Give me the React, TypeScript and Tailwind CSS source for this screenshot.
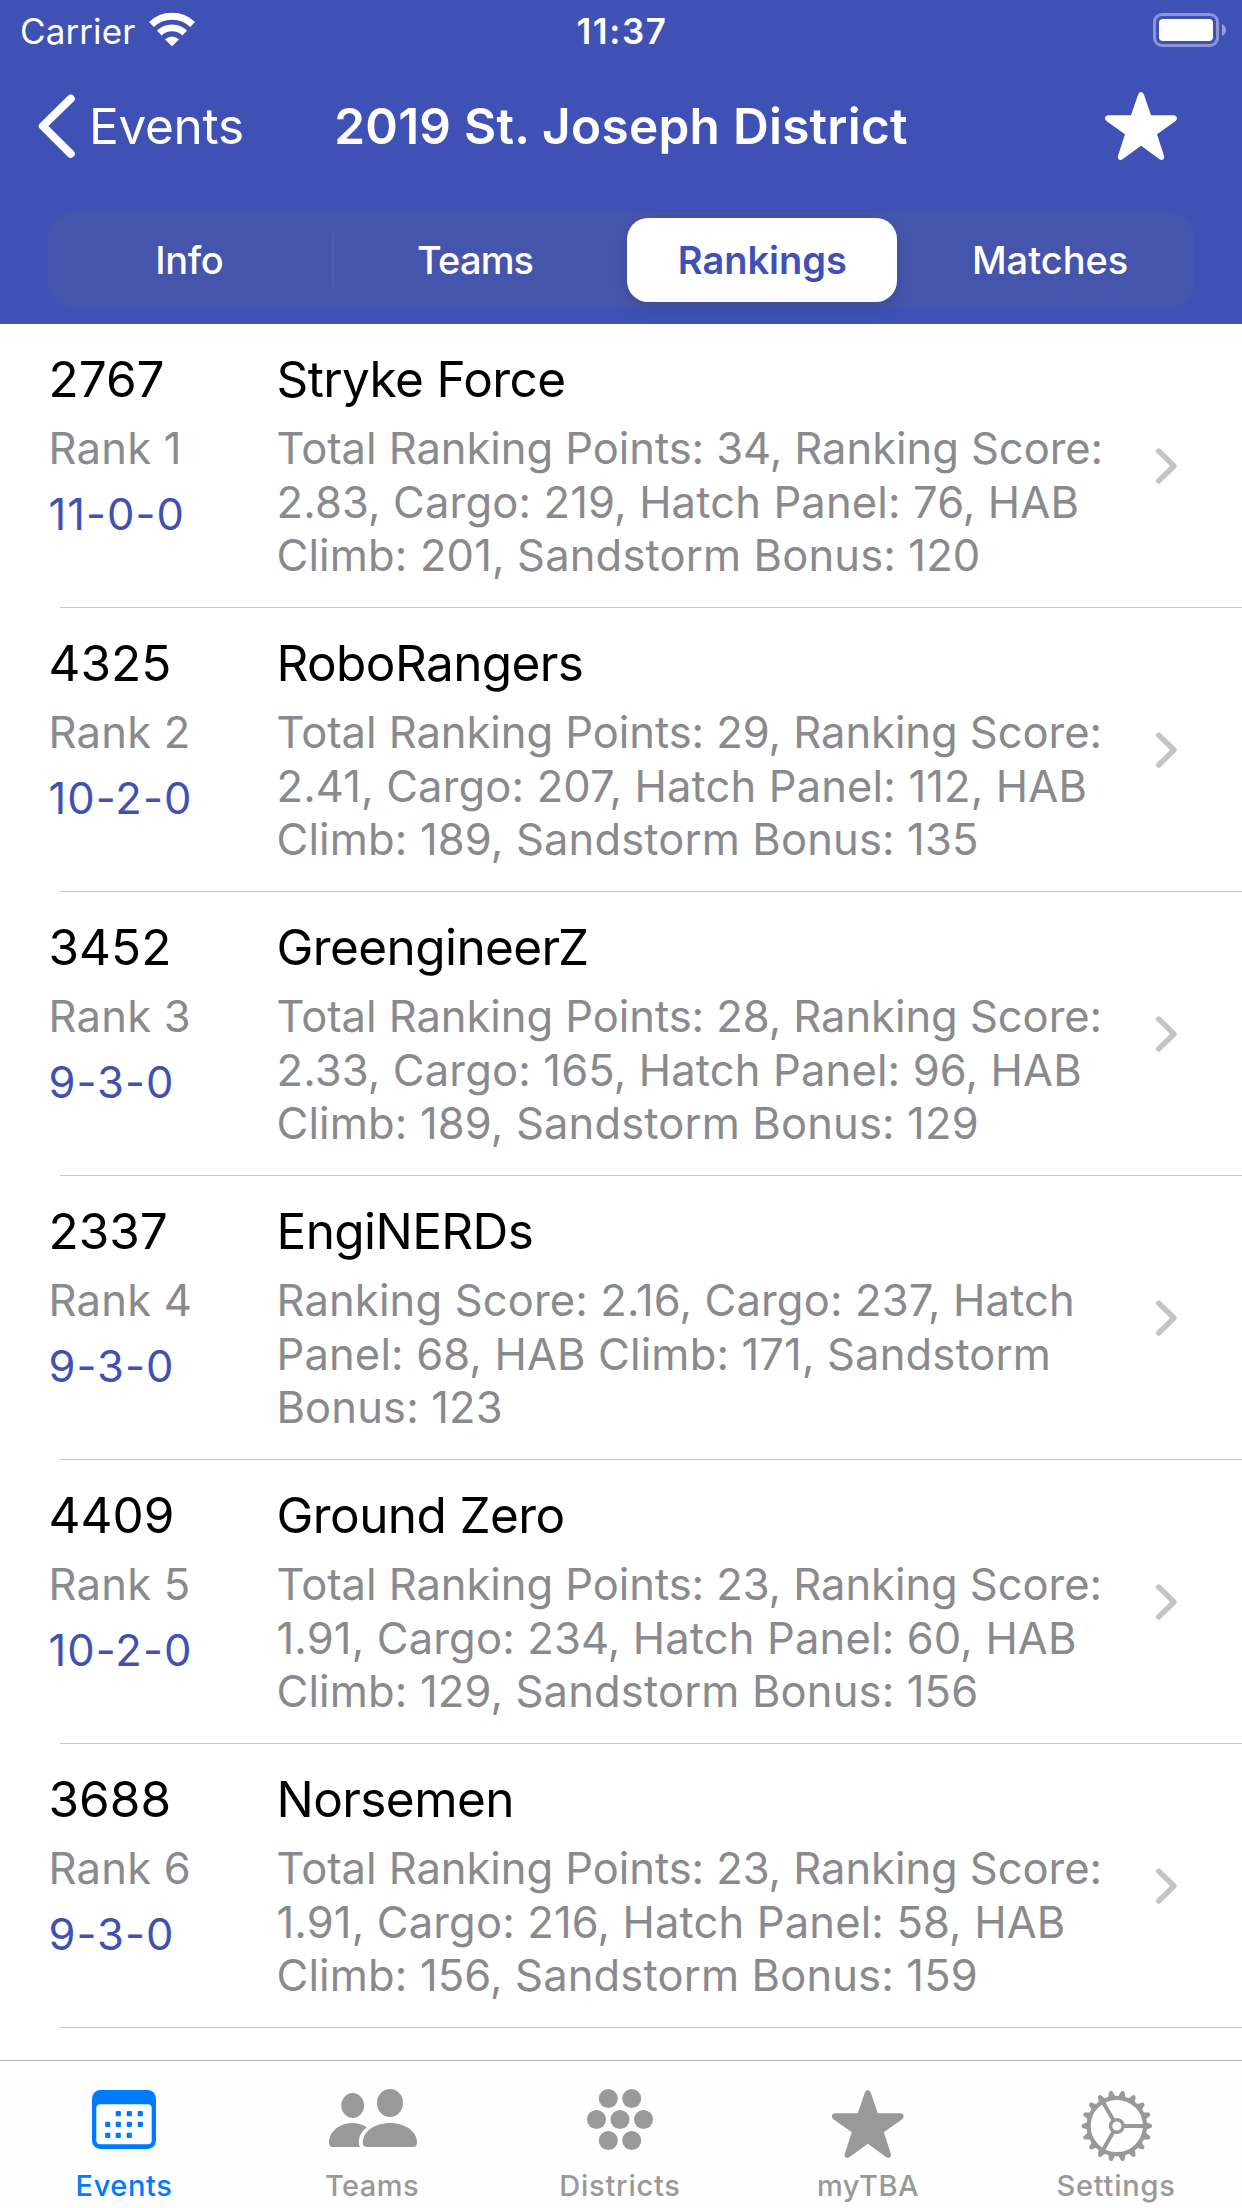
import React from "react";

type Team = { number: string; rank: number; record: string; name: string; detail: string[] };

const TEAMS: Team[] = [
  { number: "2767", rank: 1, record: "11-0-0", name: "Stryke Force", detail: ["Total Ranking Points: 34, Ranking Score:", "2.83, Cargo: 219, Hatch Panel: 76, HAB", "Climb: 201, Sandstorm Bonus: 120"] },
  { number: "4325", rank: 2, record: "10-2-0", name: "RoboRangers", detail: ["Total Ranking Points: 29, Ranking Score:", "2.41, Cargo: 207, Hatch Panel: 112, HAB", "Climb: 189, Sandstorm Bonus: 135"] },
  { number: "3452", rank: 3, record: "9-3-0", name: "GreengineerZ", detail: ["Total Ranking Points: 28, Ranking Score:", "2.33, Cargo: 165, Hatch Panel: 96, HAB", "Climb: 189, Sandstorm Bonus: 129"] },
  { number: "2337", rank: 4, record: "9-3-0", name: "EngiNERDs", detail: ["Ranking Score: 2.16, Cargo: 237, Hatch", "Panel: 68, HAB Climb: 171, Sandstorm", "Bonus: 123"] },
  { number: "4409", rank: 5, record: "10-2-0", name: "Ground Zero", detail: ["Total Ranking Points: 23, Ranking Score:", "1.91, Cargo: 234, Hatch Panel: 60, HAB", "Climb: 129, Sandstorm Bonus: 156"] },
  { number: "3688", rank: 6, record: "9-3-0", name: "Norsemen", detail: ["Total Ranking Points: 23, Ranking Score:", "1.91, Cargo: 216, Hatch Panel: 58, HAB", "Climb: 156, Sandstorm Bonus: 159"] },
];

const STAR =
  "M33.2 2.2Q36 -2 38.8 2.2L46 23.3L68.5 23.3C72 23.3 73.2 27 70.3 29.2L52 42.3L59 63.8C60 67.2 57 69.2 54.2 67L36 53.7L17.8 67C15 69.2 12 67.2 13 63.8L20 42.3L1.7 29.2C-1.2 27 0 23.3 3.5 23.3L26 23.3Z";

function StatusBar() {
  return (
    <div className="grid h-[62px] grid-cols-3 items-center pl-5 pr-[15px]">
      <div className="flex items-center gap-[14px]">
        <span className="text-[35px] leading-none tracking-[0.003em]">Carrier</span>
        <svg className="mb-1 h-[36px] w-[46px]" viewBox="0 0 46 36" fill="none">
          <path d="M2.4 13.6A29.6 29.6 0 0 1 43.6 13.6" stroke="#fff" strokeWidth="7" />
          <path d="M10.3 22A18.3 18.3 0 0 1 35.7 22" stroke="#fff" strokeWidth="6.8" />
          <path d="M23 35.2L16 28.4Q23 22.6 30 28.4Z" fill="#fff" />
        </svg>
      </div>
      <span className="pr-[3px] text-center text-[35px] leading-none font-semibold tracking-[0.045em]">11:37</span>
      <svg className="mb-0.5 h-[34px] w-[74px] justify-self-end" viewBox="0 0 74 34" fill="none">
        <rect x="1.5" y="1.5" width="63" height="31" rx="7.5" stroke="#fff" strokeOpacity="0.4" strokeWidth="3" />
        <rect x="6" y="6" width="54" height="22" rx="4" fill="#fff" />
        <path d="M69 11V23Q73 21 73 17T69 11Z" fill="#fff" fillOpacity="0.45" />
      </svg>
    </div>
  );
}

function NavBar() {
  return (
    <div className="grid h-32 grid-cols-[300px_1fr_300px] items-center">
      <div className="flex items-center pl-9">
        <svg className="h-[66px] w-[42px]" viewBox="0 0 42 66" fill="none">
          <path d="M34.8 5.7L6.8 33L34.8 60.8" stroke="#fff" strokeWidth="8" strokeLinecap="round" strokeLinejoin="round" />
        </svg>
        <span className="mt-0.5 ml-[11px] text-[49.5px] leading-none tracking-[-0.0057em]">Events</span>
      </div>
      <h1 className="mt-0.5 text-center text-[49.5px] leading-none font-semibold tracking-[0.0055em] whitespace-nowrap">
        2019 St. Joseph District
      </h1>
      <svg className="mr-[65px] h-[68px] w-[72px] justify-self-end" viewBox="0 0 72 68" fill="#fff">
        <path d={STAR} />
      </svg>
    </div>
  );
}

function Segments() {
  return (
    <div className="mx-12 mt-[22px] grid h-24 grid-cols-4 items-center rounded-[27px] bg-[#4655ac] pr-[3px] text-center text-[38px] leading-none font-medium">
      <div className="flex h-[54px] items-center justify-center border-r-[3px] border-[#4f5bab] tracking-[-0.009em]">Info</div>
      <div className="pr-[3px] tracking-[-0.022em]">Teams</div>
      <div className="mx-auto flex h-[84px] w-[270px] items-center justify-center rounded-[21px] bg-white font-semibold text-[#3f51b5] shadow-[0_6px_16px_rgba(0,0,0,0.12)]">
        Rankings
      </div>
      <div className="pl-1">Matches</div>
    </div>
  );
}

function Row({ team }: { team: Team }) {
  return (
    <li className="relative flex h-[284px] pt-[25px] pl-[48.5px] after:absolute after:right-0 after:bottom-0 after:left-[60px] after:h-px after:bg-[#c6c6c8]">
      <div className="w-[228px] shrink-0">
        <div className="text-[49.5px] leading-[60px]">{team.number}</div>
        <div className="mt-3 text-[43.5px] leading-[54px] tracking-[0.006em] text-[#8a8a8e]">Rank {team.rank}</div>
        <div className="mt-3 text-[43.5px] leading-[54px] tracking-[0.024em] text-[#3f51b5]">{team.record}</div>
      </div>
      <div className="w-[850px] shrink-0">
        <div className="text-[49.5px] leading-[60px] tracking-[-0.012em]">{team.name}</div>
        <p className="mt-[13px] text-[43.5px] leading-[53.6px] tracking-[0.0035em] text-[#8a8a8e]">
          {team.detail.map((line) => (
            <span key={line} className={line.startsWith("Total") ? "block tracking-[-0.001em]" : "block"}>
              {line}
            </span>
          ))}
        </p>
      </div>
      <svg className="mt-[97px] ml-[27px] h-[40px] w-[26px] shrink-0" viewBox="0 0 26 40" fill="none">
        <path d="M4.7 5L20 20L4.7 35" stroke="#c4c4c6" strokeWidth="5.4" strokeLinecap="round" strokeLinejoin="round" />
      </svg>
    </li>
  );
}

const DOTS = [
  [44.3, 33.7], [55.3, 33.7], [66.3, 33.7],
  [33.7, 44.3], [44.3, 44.3], [55.3, 44.3], [66.3, 44.3],
  [33.7, 55.3], [44.3, 55.3], [55.3, 55.3],
];
const CIRCLES = [[38.3, 18.5], [61.7, 18.5], [26.5, 39.5], [50, 39.5], [73.5, 39.5], [38.3, 60.5], [61.7, 60.5]];
const TEETH = Array.from({ length: 18 }, (_, i) => i * 20);

const TABS = [
  {
    label: "Events",
    text: "tracking-[0.036em] text-[#007aff]",
    icon: (
      <>
        <rect x="18" y="10" width="64" height="59" rx="8.5" />
        <rect x="22.3" y="24.3" width="55.4" height="40" rx="4" fill="#fff" />
        {DOTS.map(([x, y]) => (
          <rect key={`${x}-${y}`} x={x - 2.6} y={y - 2.6} width="5.2" height="5.2" rx="1" />
        ))}
      </>
    ),
  },
  {
    label: "Teams",
    text: "tracking-[0.026em] text-[#999]",
    icon: (
      <>
        <ellipse cx="30.7" cy="25.5" rx="11.4" ry="12.5" />
        <ellipse cx="68" cy="23" rx="13" ry="14" />
        <path d="M11 67Q7 67 7 62.5C7 52 17 43 30.5 43C36 43 41 44.7 44.7 47.3C39 52 36.8 57 36.8 62.5Q36.8 65.5 38 67Z" />
        <path d="M45 67Q40.7 67 40.7 62.5C40.7 52 52 43 68 43C84 43 95 52 95 62.5Q95 67 91 67Z" />
      </>
    ),
  },
  {
    label: "Districts",
    text: "tracking-[0.048em] text-[#999]",
    icon: CIRCLES.map(([x, y]) => <circle key={`${x}-${y}`} cx={x} cy={y} r="9.5" />),
  },
  {
    label: "myTBA",
    text: "tracking-[0.03em] text-[#999]",
    icon: <path transform="translate(13.8 10)" d={STAR} />,
  },
  {
    label: "Settings",
    text: "tracking-[0.048em] text-[#999]",
    icon: (
      <g transform="translate(50.8 46)">
        <circle r="28.2" fill="none" stroke="currentColor" strokeWidth="4.2" />
        <circle r="6.3" fill="none" stroke="currentColor" strokeWidth="3.4" />
        {[0, 120, 240].map((a) => (
          <path key={a} d="M7 -2H28V2H7Z" transform={`rotate(${a})`} />
        ))}
        {TEETH.map((a) => (
          <path key={a} d="M29 -3.8L34.6 -1.8Q36.4 0 34.6 1.8L29 3.8Z" transform={`rotate(${a})`} />
        ))}
      </g>
    ),
  },
];

function TabBar() {
  return (
    <nav className="mt-auto grid h-[148px] grid-cols-5 border-t border-[#b2b2b2] bg-[#fefefe] pr-0.5">
      {TABS.map((tab) => (
        <div key={tab.label} className={`flex flex-col items-center pt-[19px] ${tab.text}`}>
          <svg className="h-[84px] w-[100px] shrink-0" viewBox="0 0 100 84" fill="currentColor">
            {tab.icon}
          </svg>
          <span className="mt-1 text-[29px] leading-[36px] font-medium">{tab.label}</span>
        </div>
      ))}
    </nav>
  );
}

export default function App() {
  return (
    <div className="flex h-[2208px] w-[1242px] flex-col overflow-hidden bg-white font-['Inter',sans-serif] text-black">
      <header className="h-[324px] shrink-0 bg-[#3f51b5] text-white">
        <StatusBar />
        <NavBar />
        <Segments />
      </header>
      <ul>
        {TEAMS.map((team) => (
          <Row key={team.number} team={team} />
        ))}
      </ul>
      <TabBar />
    </div>
  );
}
